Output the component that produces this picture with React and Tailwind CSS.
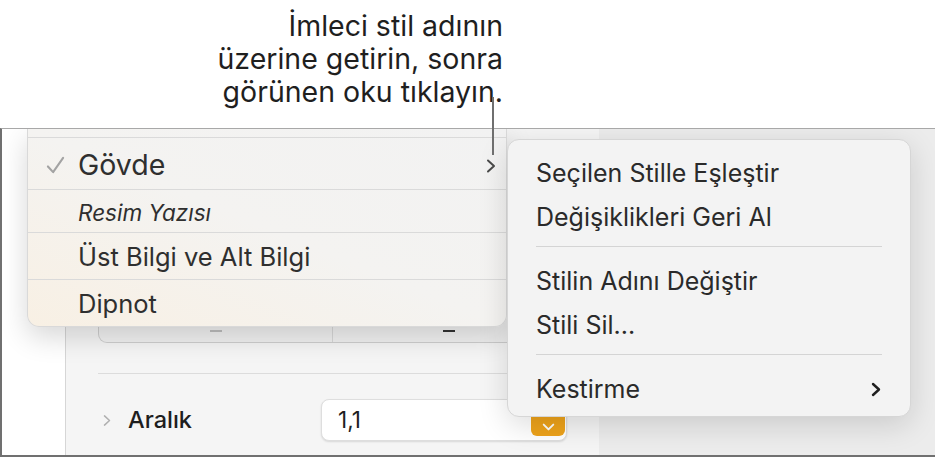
import React from "react";

const STYLE_ROWS = [
  { label: "Resim Yazısı", cls: "h-[43px] text-[22.5px] italic" },
  { label: "Üst Bilgi ve Alt Bilgi", cls: "h-[47px] text-[25.5px]" },
  { label: "Dipnot", cls: "h-[46px] text-[25.5px]" },
];

function Chevron({ className = "", stroke = "currentColor", width = 2 }) {
  return (
    <svg viewBox="0 0 12 16" className={className} fill="none">
      <path d="M3 2.5 L9 8 L3 13.5" stroke={stroke} strokeWidth={width} strokeLinecap="round" strokeLinejoin="round" />
    </svg>
  );
}

function StyleMenu() {
  return (
    <div className="absolute left-[25px] top-0 w-[480px] h-[198px] rounded-b-[12px] overflow-hidden bg-gradient-to-tr from-[#f8f0e4] via-[#f4f3f1] to-[#f2f2f2] border border-t-0 border-[#d9d9d9] shadow-[0_10px_28px_rgba(0,0,0,0.16)] text-[#2f2f2f]">
      <div className="h-[9px] border-b border-[#dadada]" />
      <div className="h-[52px] flex items-center border-b border-[#dadada] pt-[4px]">
        <svg viewBox="0 0 20 20" className="w-[19px] h-[19px] ml-[18px] mr-[13px]" fill="none">
          <path d="M2 11 L7.5 17 L18 2" stroke="#a3a3a3" strokeWidth="2.2" strokeLinecap="round" strokeLinejoin="round" />
        </svg>
        <span className="text-[28.5px] leading-none">Gövde</span>
        <Chevron className="w-[12px] h-[16px] ml-auto mr-[9px] text-[#4a4a4a]" />
      </div>
      {STYLE_ROWS.map((r, i) => (
        <div
          key={r.label}
          className={`flex items-center pl-[50px] pt-[3px] ${r.cls} ${i < STYLE_ROWS.length - 1 ? "border-b border-[#dadada]" : ""}`}
        >
          {r.label}
        </div>
      ))}
    </div>
  );
}

function ActionMenu() {
  const Item = ({ children, chevron }) => (
    <div className="h-[44px] flex items-center px-[28px] pt-[3px] text-[25px]">
      {children}
      {chevron && <Chevron className="w-[12px] h-[17px] ml-auto text-[#1e1e1e]" width={2.4} />}
    </div>
  );
  const Sep = () => (
    <div className="px-[28px] pt-[8px] pb-[11px]">
      <div className="h-px bg-[#d4d4d4]" />
    </div>
  );
  return (
    <div className="absolute left-[505px] top-[10px] w-[404px] h-[278px] rounded-[12px] bg-[#f3f3f3] border border-[#d6d6d6] shadow-[0_8px_30px_rgba(0,0,0,0.14)] pt-[10px] text-[#2a2a2a]">
      <Item>Seçilen Stille Eşleştir</Item>
      <Item>Değişiklikleri Geri Al</Item>
      <Sep />
      <Item>Stilin Adını Değiştir</Item>
      <Item>Stili Sil...</Item>
      <Sep />
      <Item chevron>Kestirme</Item>
    </div>
  );
}

export default function App() {
  return (
    <div className="relative w-[935px] h-[457px] overflow-hidden bg-white font-['Inter',sans-serif]">
      <div className="h-[128px] flex justify-end pr-[432px] pt-[9px]">
        <p className="text-right text-[28.5px] leading-[33px] text-[#1f1f1f]">
          İmleci stil adının
          <br />
          üzerine getirin, sonra
          <br />
          görünen oku tıklayın.
        </p>
      </div>

      <div className="relative flex h-[329px] overflow-hidden border-t border-l-2 border-b-2 border-t-[#a8a8a8] border-l-[#707070] border-b-[#707070]">
        <div className="w-[64px] shrink-0 bg-white border-r border-[#d6d6d6]" />
        <div className="w-[533px] shrink-0 bg-[#f5f5f5] pl-[32px]">
          <div className="mt-[110px] h-[104px] w-[468px] rounded-b-[9px] border border-t-0 border-[#cfcfcf] bg-[#f1f1f1] flex">
            <div className="w-[234px] border-r border-[#d8d8d8] flex items-end justify-center pb-[10px]">
              <div className="w-[12px] h-[2px] bg-[#bdbdbd]" />
            </div>
            <div className="flex-1 flex items-end justify-center pb-[10px]">
              <div className="w-[12px] h-[2px] bg-[#333]" />
            </div>
          </div>
          <div className="mt-[30px] h-px bg-[#dcdcdc]" />
          <div className="mt-[25px] flex items-center">
            <Chevron className="w-[10px] h-[15px] ml-[4px] text-[#b0b0b0]" width={1.8} />
            <span className="ml-[16px] text-[23.5px] font-medium text-[#1e1e1e]">Aralık</span>
            <div className="relative ml-[auto] mr-[32px] w-[246px] h-[42px] rounded-[8px] bg-white border border-[#dedede] shadow-[0_1px_2px_rgba(0,0,0,0.12)] flex items-center pl-[16px] text-[22.5px] text-[#1e1e1e]">
              1,1
              <div className="absolute right-[1px] top-[4px] bottom-[4px] w-[34px] rounded-[6px] bg-[#eea31b] flex items-end justify-center pb-[5px]">
                <svg viewBox="0 0 16 10" className="w-[13px] h-[8px]" fill="none">
                  <path d="M2 2 L8 8 L14 2" stroke="white" strokeWidth="2.4" strokeLinecap="round" strokeLinejoin="round" />
                </svg>
              </div>
            </div>
          </div>
        </div>
        <div className="flex-1 bg-[#ececec]" />

        <StyleMenu />
        <ActionMenu />
      </div>

      <div className="absolute left-[492px] top-[97px] w-[2px] h-[58px] bg-[#6f6f6f]" />
    </div>
  );
}
